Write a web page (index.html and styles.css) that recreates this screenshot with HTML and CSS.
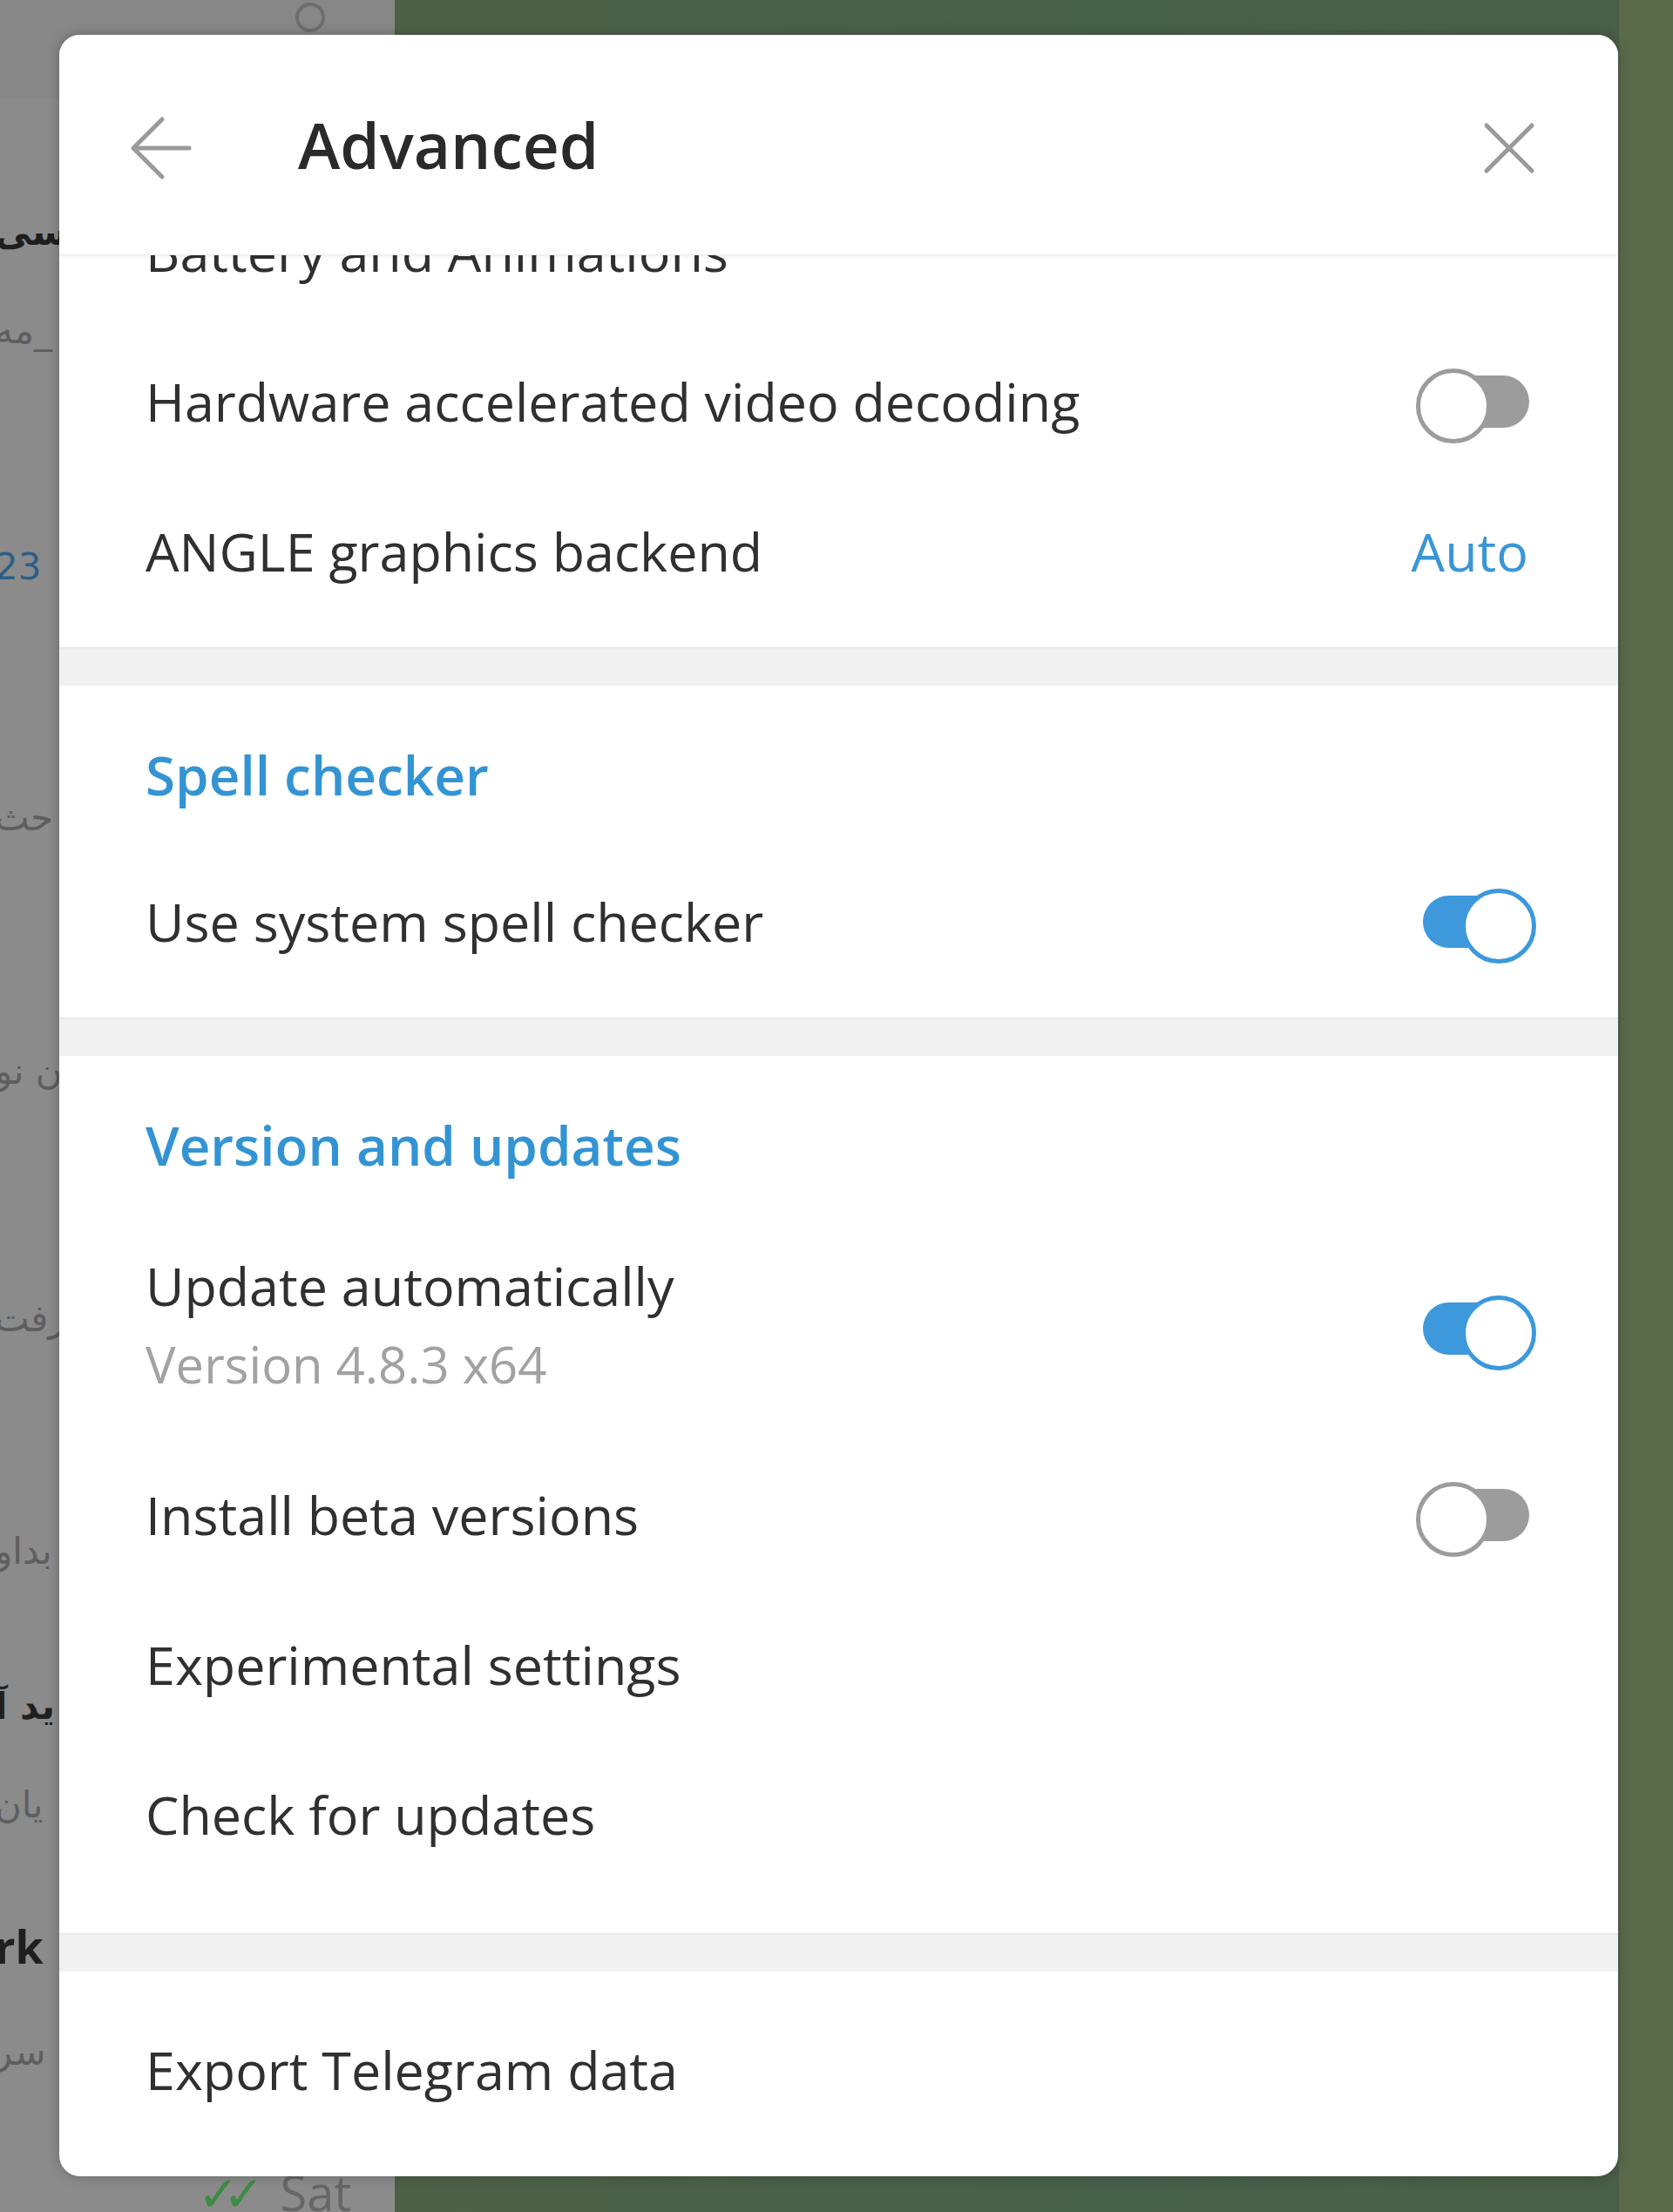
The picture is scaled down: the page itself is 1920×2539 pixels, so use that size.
FILE: index.html
```html
<!DOCTYPE html>
<html lang="en">
<head>
<meta charset="utf-8">
<title>Advanced</title>
<link rel="stylesheet" href="styles.css">
</head>
<body>
<div class="desk">
  <aside class="chats">
    <div class="chats-top">
      <svg class="search" viewBox="0 0 40 40" width="40" height="40"><circle cx="20" cy="20" r="15" fill="none" stroke="#6e6e6e" stroke-width="4"/></svg>
    </div>
    <div class="frag f1 dark">سی</div>
    <div class="frag f2">مه_</div>
    <div class="frag f3 blue">23</div>
    <div class="frag f4">حث</div>
    <div class="frag f5">ن نو</div>
    <div class="frag f6">رفت</div>
    <div class="frag f7">بداو</div>
    <div class="frag f8 dark">ید آ</div>
    <div class="frag f9">یان</div>
    <div class="frag f10 dark latin">rk</div>
    <div class="frag f11">سر</div>
    <div class="frag f12 sent"><span class="ticks">✓✓</span> Sat</div>
  </aside>
  <main class="wall"></main>
  <div class="strip"></div>
</div>

<section class="modal">
  <header class="modal-head">
    <svg class="ico-back" viewBox="0 0 72 76" width="72" height="76"><path d="M69 38H5M38 5L5 38l33 33" fill="none" stroke="#9a9a9a" stroke-width="5" stroke-linecap="round" stroke-linejoin="round"/></svg>
    <h1 class="title">Advanced</h1>
    <svg class="ico-close" viewBox="0 0 60 60" width="60" height="60"><path d="M4 4L56 56M56 4L4 56" fill="none" stroke="#9a9a9a" stroke-width="5" stroke-linecap="round"/></svg>
  </header>
  <div class="scroll">
    <div class="content">
      <div class="section first">
        <div class="row"><span class="label">Battery and Animations</span></div>
        <div class="row"><span class="label">Hardware accelerated video decoding</span><span class="toggle off"></span></div>
        <div class="row"><span class="label">ANGLE graphics backend</span><span class="value">Auto</span></div>
      </div>
      <div class="band"></div>
      <div class="section">
        <div class="sec-title">Spell checker</div>
        <div class="row"><span class="label">Use system spell checker</span><span class="toggle on"></span></div>
      </div>
      <div class="band"></div>
      <div class="section tall-bottom">
        <div class="sec-title">Version and updates</div>
        <div class="row two">
          <div class="text">
            <div class="label">Update automatically</div>
            <div class="sub">Version 4.8.3 x64</div>
          </div>
          <span class="toggle on"></span>
        </div>
        <div class="row"><span class="label">Install beta versions</span><span class="toggle off"></span></div>
        <div class="row"><span class="label">Experimental settings</span></div>
        <div class="row"><span class="label">Check for updates</span></div>
      </div>
      <div class="band"></div>
      <div class="section last">
        <div class="row"><span class="label">Export Telegram data</span></div>
      </div>
    </div>
  </div>
</section>
</body>
</html>
```
FILE: styles.css
```css
* { box-sizing: border-box; }
html, body { margin: 0; padding: 0; }
body {
  width: 1920px;
  height: 2539px;
  overflow: hidden;
  position: relative;
  font-family: "Open Sans", "Noto Sans", sans-serif;
  background: #4b5e46;
}

/* background desktop */
.desk { display: flex; height: 2539px; }
.chats {
  width: 453px;
  flex: none;
  background: #8b8b8b;
  display: flex;
  flex-direction: column;
  overflow: hidden;
}
.chats-top {
  height: 113px;
  flex: none;
  background: #878787;
  display: flex;
  padding-left: 336px;
  padding-top: 0;
}
.search { display: block; }
.frag {
  height: 60px;
  line-height: 60px;
  font-family: "DejaVu Sans", "Noto Sans", sans-serif;
  font-size: 42px;
  color: #5e5e5e;
  white-space: nowrap;
  flex: none;
  margin-left: -6px;
}
.frag.dark { color: #1f1f1f; font-weight: bold; }
.frag.blue { color: #2c5f86; }
.frag.latin { font-family: "Open Sans", sans-serif; font-size: 52px; }
.f1 { margin-top: 124px; }
.f2 { margin-top: 53px; }
.f3 { margin-top: 211px; }
.f4 { margin-top: 228px; }
.f5 { margin-top: 231px; }
.f6 { margin-top: 224px; }
.f7 { margin-top: 207px; }
.f8 { margin-top: 118px; }
.f9 { margin-top: 53px; }
.f10 { margin-top: 102px; }
.f11 { margin-top: 62px; }
.f12 { margin-top: 100px; margin-left: 227px; font-family: "Open Sans", sans-serif; font-size: 56px; color: #666; }
.ticks { color: #3f8a44; letter-spacing: -18px; margin-right: 22px; }

.wall {
  flex: 1;
  background: linear-gradient(90deg, #4d6047 0%, #47604a 60%, #4a5f47 100%);
}
.strip { width: 62px; flex: none; background: #5a6a4a; }

/* modal */
.modal {
  position: absolute;
  left: 68px;
  top: 40px;
  width: 1789px;
  height: 2458px;
  background: #fff;
  border-radius: 24px;
  overflow: hidden;
  display: flex;
  flex-direction: column;
  box-shadow: 0 0 14px rgba(0, 0, 0, 0.25);
}
.modal-head {
  height: 252px;
  flex: none;
  display: flex;
  align-items: center;
  padding-left: 80px;
  padding-right: 95px;
  position: relative;
  z-index: 2;
  background: #fff;
  box-shadow: 0 1px 0 #e9e9e9, 0 3px 4px rgba(0, 0, 0, 0.05);
}
.ico-back { display: block; flex: none; margin-top: 8px; }
.title {
  margin: 0 0 0 122px;
  font-size: 73px;
  font-weight: 600;
  color: #2a2a2a;
  line-height: 98px;
}
.ico-close { display: block; flex: none; margin-left: auto; margin-top: 8px; }

.scroll { flex: 1; overflow: hidden; position: relative; z-index: 1; }
.content { margin-top: -89px; }

.section { padding-bottom: 24px; }
.section.tall-bottom { padding-bottom: 50px; }
.section.last { padding-top: 27px; padding-bottom: 0; }

.row {
  height: 172px;
  display: flex;
  align-items: center;
  padding: 0 97px 0 99px;
}
.label {
  font-size: 61px;
  line-height: 84px;
  color: #303030;
  white-space: nowrap;
}
.value {
  margin-left: auto;
  margin-right: 6px;
  font-size: 61px;
  line-height: 84px;
  color: #3a96d6;
}
.sec-title {
  padding: 60px 99px 41px;
  font-size: 62px;
  line-height: 84px;
  font-weight: 600;
  color: #3394d4;
}
.row.two { height: 256px; }
.row.two .text { align-self: flex-start; padding-top: 37px; }
.sub {
  margin-top: 8px;
  font-size: 58px;
  line-height: 79px;
  color: #a2a2a2;
}

.band {
  height: 44px;
  background: #f1f1f1;
  box-shadow: inset 0 2px 2px -1px rgba(0, 0, 0, 0.07);
}

/* toggles */
.toggle {
  margin-left: auto;
  width: 134px;
  height: 80px;
  flex: none;
  position: relative;
}
.toggle::before {
  content: "";
  position: absolute;
  left: 4px;
  right: 4px;
  top: 10px;
  height: 60px;
  border-radius: 30px;
  background: #9c9c9c;
}
.toggle::after {
  content: "";
  position: absolute;
  top: 2px;
  width: 76px;
  height: 76px;
  border-radius: 50%;
  background: #fff;
  border: 5px solid #9c9c9c;
}
.toggle.off { margin-right: 1px; }
.toggle.off::after { left: 0; }
.toggle.on { margin-right: -3px; }
.toggle.on::before { background: #3d98dc; }
.toggle.on::after { right: 0; border-color: #3d98dc; }
```
